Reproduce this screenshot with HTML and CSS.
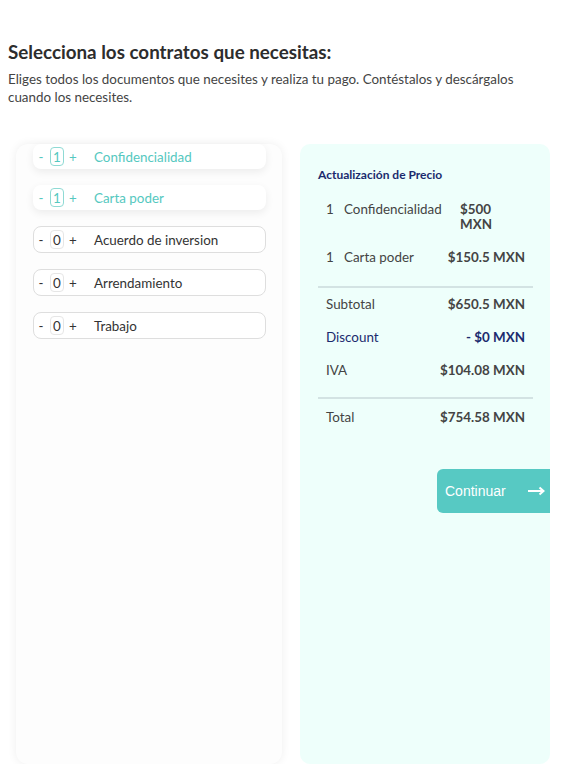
FILE: index.html
```html
<!DOCTYPE html>
<html lang="es">
<head>
<meta charset="utf-8">
<link rel="stylesheet" href="styles.css">
</head>
<body>
<header class="intro">
  <h1>Selecciona los contratos que necesitas:</h1>
  <p>Eliges todos los documentos que necesites y realiza tu pago. Contéstalos y descárgalos cuando los necesites.</p>
</header>
<main class="layout">
  <section class="picker">
    <div class="item active"><span class="op">-</span><span class="qty">1</span><span class="op">+</span><span class="label">Confidencialidad</span></div>
    <div class="item active"><span class="op">-</span><span class="qty">1</span><span class="op">+</span><span class="label">Carta poder</span></div>
    <div class="item"><span class="op">-</span><span class="qty">0</span><span class="op">+</span><span class="label">Acuerdo de inversion</span></div>
    <div class="item"><span class="op">-</span><span class="qty">0</span><span class="op">+</span><span class="label">Arrendamiento</span></div>
    <div class="item"><span class="op">-</span><span class="qty">0</span><span class="op">+</span><span class="label">Trabajo</span></div>
  </section>
  <aside class="summary">
    <h2>Actualización de Precio</h2>
    <div class="line-items">
      <div class="line"><span class="n">1</span><span class="name">Confidencialidad</span><span class="price narrow">$500 MXN</span></div>
      <div class="line"><span class="n">1</span><span class="name">Carta poder</span><span class="price">$150.5 MXN</span></div>
    </div>
    <div class="totals">
      <div class="trow"><span>Subtotal</span><span class="val">$650.5 MXN</span></div>
      <div class="trow discount"><span>Discount</span><span class="val">- $0 MXN</span></div>
      <div class="trow"><span>IVA</span><span class="val">$104.08 MXN</span></div>
    </div>
    <div class="grand">
      <div class="trow"><span>Total</span><span class="val">$754.58 MXN</span></div>
    </div>
    <div class="actions">
      <button class="continue">Continuar <svg width="17" height="10" viewBox="0 0 17 10"><path d="M0 5h15M11.5 1.5 15.5 5 11.5 8.5" fill="none" stroke="#fff" stroke-width="2"/></svg></button>
    </div>
  </aside>
</main>
</body>
</html>
```
FILE: styles.css
```css
* { box-sizing: border-box; }
body {
  margin: 0;
  padding: 0 8px;
  font-family: Lato, "Noto Sans", sans-serif;
  color: #333;
  background: #fff;
}
.intro { padding-top: 40px; }
.intro h1 {
  margin: 0;
  font-size: 18.8px;
  font-weight: 700;
  color: #2d2d2d;
  line-height: 24px;
}
.intro p {
  margin: 6px 0 0;
  max-width: 540px;
  font-size: 13.4px;
  line-height: 18px;
  color: #444;
}
.layout {
  display: flex;
  gap: 18px;
  margin-top: 38px;
  padding-left: 8px;
  height: 620px;
}
.picker {
  width: 266px;
  background: #fdfdfd;
  border-radius: 12px;
  box-shadow: 0 0 10px rgba(0,0,0,0.07);
  padding: 0 16px 0 17px;
  display: flex;
  flex-direction: column;
  gap: 16px;
}
.item {
  height: 27px;
  flex-shrink: 0;
  display: flex;
  align-items: center;
  padding-left: 2px;
  border: 1px solid #dedede;
  border-radius: 8px;
  font-size: 13.4px;
  color: #333;
  background: #fff;
}
.item .op { width: 10px; text-align: center; }
.item .qty {
  width: 14px;
  height: 19px;
  margin: 0 4px;
  border: 1px solid #e6e6e6;
  border-radius: 4px;
  display: flex;
  align-items: center;
  justify-content: center;
}
.item .label { margin-left: 16px; }
.item.active {
  height: 25px;
  border: 0;
  padding-left: 3px;
  color: #55c8c0;
  box-shadow: 0 3px 8px rgba(0,0,0,0.07);
}
.item.active .qty { border-color: #8fdad4; }
.summary {
  width: 250px;
  background: #eefffb;
  border-radius: 10px;
  padding: 24px 17px 0 18px;
  overflow: hidden;
  display: flex;
  flex-direction: column;
}
.summary h2 {
  margin: 0;
  font-size: 12px;
  font-weight: 700;
  color: #1b2b6e;
  line-height: 14px;
}
.line-items {
  padding: 20px 8px 21px;
  display: flex;
  flex-direction: column;
  gap: 18px;
}
.line {
  display: flex;
  align-items: flex-start;
  font-size: 13.4px;
  line-height: 15px;
  color: #444;
}
.line .n { width: 18px; }
.line .name { flex: 1; }
.line .price { font-weight: 700; color: #444; }
.line .price.narrow { width: 36px; margin-right: 29px; }
.totals {
  border-top: 2px solid #d3e3e3;
  padding: 9px 8px 19px;
  display: flex;
  flex-direction: column;
  gap: 18px;
}
.grand {
  border-top: 2px solid #d3e3e3;
  padding: 11px 8px 0;
}
.trow {
  display: flex;
  justify-content: space-between;
  font-size: 13.4px;
  line-height: 15px;
  color: #444;
}
.trow .val { font-weight: 700; }
.trow.discount { color: #1b2b6e; }
.actions {
  display: flex;
  justify-content: flex-end;
  margin-top: 44px;
  margin-right: -17px;
}
.continue {
  width: 113px;
  height: 44px;
  border: 0;
  border-radius: 6px 0 0 6px;
  background: #57c9c3;
  color: #fff;
  font-family: "Liberation Sans", Arial, sans-serif;
  font-size: 14px;
  display: flex;
  align-items: center;
  gap: 22px;
  padding: 0 0 0 8px;
}
```
